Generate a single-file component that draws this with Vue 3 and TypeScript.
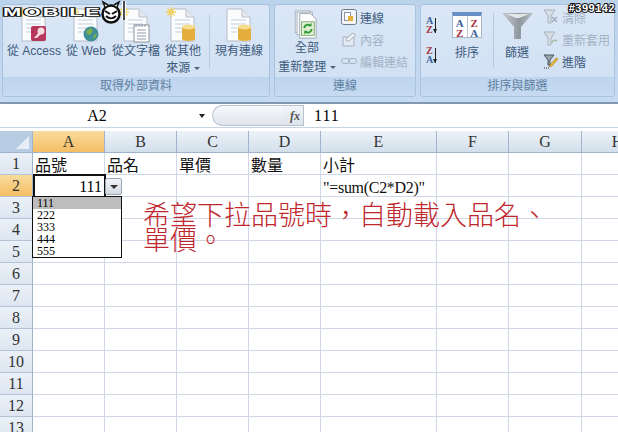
<template>
  <div class="excel">
    <div class="ribbon">
      <section class="group g-data">
        <div class="tools">
          <div class="big" v-for="b in dataButtons" :key="b.label">
            <svg class="doc" width="34" height="38" viewBox="0 0 34 38">
              <path d="M5 3h15l8 8v24H5z" fill="#fbfcfe" stroke="#b7bec8" />
              <path d="M20 3v8h8" fill="#e4e9f0" stroke="#b7bec8" />
              <path d="M9 14h15M9 18h15M9 22h15M9 26h10" stroke="#c3cfdd" />
              <g v-if="b.star" stroke="#f2d25a" stroke-width="1.300">
                <path d="M5 1v10M0 6h10M1.500 2.500l7 7M8.500 2.500l-7 7" />
              </g>
              <g v-if="b.kind === 'access'">
                <rect x="14" y="20" width="15" height="15" rx="2" fill="#b5385c" />
                <circle cx="24" cy="25" r="3.500" fill="#f6dbe2" />
                <path d="M22 26l-5 6h3l5-5z" fill="#f6dbe2" />
              </g>
              <g v-if="b.kind === 'web'">
                <circle cx="22" cy="28" r="7.500" fill="#3f8f96" />
                <path d="M17 25l5-3 2 3-3 4-3-1zM25 29l3-2-1 4-3 2z" fill="#7fae4e" />
              </g>
              <g v-if="b.kind === 'text'">
                <rect x="15" y="19" width="15" height="17" fill="#fff" stroke="#8a939e" />
                <path d="M17 18v3M20 18v3M23 18v3M26 18v3M18 24h9M18 27h9M18 30h9M18 33h9" stroke="#8f9aa7" />
              </g>
              <g v-if="b.kind === 'db'">
                <path d="M16 21h13v12c0 2.500-13 2.500-13 0z" fill="#e4ae3c" />
                <ellipse cx="22.500" cy="21" rx="6.500" ry="2.500" fill="#f7dc8b" />
              </g>
            </svg>
            <span class="lbl">{{ b.label }}<template v-if="b.more"><br />{{ b.more }} <i class="caret"></i></template></span>
          </div>
          <div class="sep"></div>
          <div class="big existing">
            <svg class="doc" width="34" height="38" viewBox="0 0 34 38">
              <path d="M5 3h15l8 8v24H5z" fill="#fbfcfe" stroke="#b7bec8" />
              <path d="M20 3v8h8" fill="#e4e9f0" stroke="#b7bec8" />
              <path d="M9 14h15M9 18h15M9 22h6M9 26h6" stroke="#c3cfdd" />
              <path d="M16 21h13v12c0 2.500-13 2.500-13 0z" fill="#e4ae3c" />
              <ellipse cx="22.500" cy="21" rx="6.500" ry="2.500" fill="#f7dc8b" />
            </svg>
            <span class="lbl">現有連線</span>
          </div>
        </div>
        <div class="caption">取得外部資料</div>
      </section>

      <section class="group g-conn">
        <div class="tools">
          <div class="big refresh">
            <svg width="30" height="32" viewBox="0 0 30 32">
              <rect x="2" y="1" width="17" height="24" fill="#eef1f5" stroke="#aab2bd" />
              <rect x="4" y="2.500" width="17" height="25" fill="#f5f7fa" stroke="#aab2bd" />
              <path d="M7 4h12l6 6v21H7z" fill="#fff" stroke="#9aa3ae" />
              <rect x="9" y="13" width="14" height="15" fill="#dff0d4" stroke="#7ba968" />
              <path d="M12 20a4 4 0 0 1 7-2.500M20 21a4 4 0 0 1-7 2.500" fill="none" stroke="#2f9a35" stroke-width="2" />
              <path d="M20 14v4h-4zM12 27v-4h4z" fill="#2f9a35" />
            </svg>
            <span class="lbl">全部<br />重新整理 <i class="caret"></i></span>
          </div>
          <div class="stack">
            <div class="row">
              <svg width="16" height="16" viewBox="0 0 16 16">
                <rect x=".5" y=".5" width="15" height="15" rx="2" fill="#f3f5f8" stroke="#6f7b89" />
                <rect x="3.500" y="3.500" width="6" height="8" fill="#fff" stroke="#8896a6" />
                <rect x="7" y="7" width="5" height="5" fill="#e4ae3c" />
              </svg>
              <span>連線</span>
            </div>
            <div class="row off">
              <svg width="16" height="16" viewBox="0 0 16 16">
                <path d="M2 6h11v9H2z" fill="#e3eaf3" stroke="#a9b3bf" />
                <path d="M5 8l7-6 3 2-7 6H5z" fill="#eef2f7" stroke="#a9b3bf" />
              </svg>
              <span>內容</span>
            </div>
            <div class="row off">
              <svg width="16" height="16" viewBox="0 0 16 16">
                <rect x=".5" y="5.500" width="8" height="5" rx="2.500" fill="none" stroke="#a9b3bf" />
                <rect x="7.500" y="5.500" width="8" height="5" rx="2.500" fill="none" stroke="#a9b3bf" />
              </svg>
              <span>編輯連結</span>
            </div>
          </div>
        </div>
        <div class="caption">連線</div>
      </section>

      <section class="group g-sort">
        <div class="tools">
          <div class="az">
            <div class="azbtn"><span><b class="blue">A</b><b class="red">Z</b></span><i></i></div>
            <div class="azbtn"><span><b class="red">Z</b><b class="blue">A</b></span><i></i></div>
          </div>
          <div class="big sort">
            <div class="sorticon">
              <span><b class="blue">A</b><b class="red">Z</b></span>
              <span><b class="red">Z</b><b class="blue">A</b></span>
            </div>
            <span class="lbl">排序</span>
          </div>
          <div class="sep"></div>
          <div class="big filter">
            <svg width="31" height="27" viewBox="0 0 31 27">
              <defs>
                <linearGradient id="funnel" x1="0" y1="0" x2="1" y2="0">
                  <stop offset="0" stop-color="#c9ced3" />
                  <stop offset=".55" stop-color="#8f979f" />
                  <stop offset="1" stop-color="#b5bcc3" />
                </linearGradient>
              </defs>
              <path d="M0 1h31L19 15v12h-7V15z" fill="url(#funnel)" />
              <path d="M4 2h23l-10 4h-3z" fill="#e6e9ec" />
            </svg>
            <span class="lbl">篩選</span>
          </div>
          <div class="stack">
            <div class="row off">
              <svg width="16" height="16" viewBox="0 0 16 16">
                <path d="M1 1h11L8 7v7H5V7z" fill="#d7dde5" stroke="#a9b3bf" />
                <path d="M9 8l5 5M14 8l-5 5" stroke="#9fabb8" stroke-width="1.300" />
              </svg>
              <span>清除</span>
            </div>
            <div class="row off">
              <svg width="16" height="16" viewBox="0 0 16 16">
                <path d="M1 1h11L8 7v7H5V7z" fill="#d7dde5" stroke="#a9b3bf" />
                <path d="M9 12a3 3 0 0 1 5-2" fill="none" stroke="#9fbf9f" stroke-width="1.500" />
              </svg>
              <span>重新套用</span>
            </div>
            <div class="row">
              <svg width="16" height="16" viewBox="0 0 16 16">
                <path d="M1 2h10L7 7v5H5V7z" fill="#9aa3ad" stroke="#4c5660" />
                <path d="M7 12l6-7 2 1-6 7-3 1z" fill="#e8b93a" stroke="#a67d1c" stroke-width=".6" />
                <path d="M1 15h1M3 15h1M5 15h1" stroke="#333" />
              </svg>
              <span>進階</span>
            </div>
          </div>
        </div>
        <div class="caption">排序與篩選</div>
      </section>
    </div>

    <div class="formula">
      <div class="namebox">A2</div>
      <i class="namearrow"></i>
      <div class="capsule"></div>
      <div class="fx">fx</div>
      <div class="input">111</div>
    </div>

    <div class="sheet">
      <div class="grid">
        <div class="corner"><i></i></div>
        <div v-for="c in columns" :key="c" class="colhead" :class="{ on: c === 'A' }">{{ c }}</div>
        <template v-for="r in rows" :key="r">
          <div class="rowhead" :class="{ on: r === 2 }">{{ r }}</div>
          <div v-for="c in columns" :key="c" class="cell" :class="{ tight: c + r === 'E2' }">{{ cellText(c, r) }}</div>
        </template>
      </div>

      <div class="active">111</div>
      <div class="dropbtn"><i></i></div>
      <ul class="droplist">
        <li v-for="(v, i) in options" :key="v" :class="{ sel: i === 0 }">{{ v }}</li>
      </ul>
      <div class="note">希望下拉品號時，自動載入品名、<br />單價。</div>
    </div>

    <div class="logo">
      <span class="logotext">MOBILE</span>
      <svg width="28" height="24" viewBox="0 0 28 24">
        <circle cx="11" cy="14" r="8.500" fill="#fff" stroke="#111" stroke-width="2.500" />
        <path d="M5 11l5 3M17 11l-5 3M6 16c3 3 7 3 10 0" fill="none" stroke="#111" stroke-width="2" />
        <path d="M5 7L3 2l5 3M17 7l2-5-5 3" fill="#fff" stroke="#111" stroke-width="1.500" />
        <path d="M24 1v19" stroke="#fff" stroke-width="4" />
        <path d="M24 1v19" stroke="#111" stroke-width="1.500" />
      </svg>
    </div>
    <div class="tag">#399142</div>
  </div>
</template>

<script setup lang="ts">
const dataButtons = [
  { label: '從 Access', kind: 'access', star: true, more: '' },
  { label: '從 Web', kind: 'web', star: true, more: '' },
  { label: '從文字檔', kind: 'text', star: true, more: '' },
  { label: '從其他', kind: 'db', star: true, more: '來源' },
]

const columns = ['A', 'B', 'C', 'D', 'E', 'F', 'G', 'H']
const rows = Array.from({ length: 13 }, (_, i) => i + 1)
const options = ['111', '222', '333', '444', '555']

const cells: Record<string, string> = {
  A1: '品號',
  B1: '品名',
  C1: '單價',
  D1: '數量',
  E1: '小計',
  E2: '"=sum(C2*D2)"',
}

function cellText(col: string, row: number) {
  return cells[col + row] ?? ''
}
</script>

<style scoped>
.excel {
  position: relative;
  width: 618px;
  height: 432px;
  overflow: hidden;
  background: #fff;
  font-family: "Liberation Serif", "Noto Sans CJK TC", serif;
}

.ribbon {
  display: flex;
  gap: 4px;
  height: 104px;
  box-sizing: border-box;
  padding: 4px 3px 5px 2px;
  background: linear-gradient(#bcd3ec, #c6daf1);
  border-bottom: 2px solid #7f99b5;
  font-family: "Liberation Sans", "Noto Sans CJK TC", sans-serif;
  font-size: 12px;
  color: #3d5a7c;
}
.group {
  display: flex;
  flex-direction: column;
  box-sizing: border-box;
  border: 1px solid #a9c3df;
  border-radius: 3px;
  background: linear-gradient(#dbe7f6, #cfe0f3);
  overflow: hidden;
}
.g-data { width: 268px; }
.g-conn { width: 142px; }
.g-sort { width: 195px; }
.tools {
  flex: 1;
  display: flex;
  min-height: 0;
}
.caption {
  height: 19px;
  line-height: 18px;
  text-align: center;
  background: linear-gradient(#bed5ee, #c6dbf2);
  color: #5f7f9f;
}
.big {
  display: flex;
  flex-direction: column;
  align-items: center;
  text-align: center;
  line-height: 16px;
  white-space: nowrap;
}
.g-data .tools { padding-left: 5px; }
.g-data .big { padding-top: 1px; line-height: 17px; }
.g-data .big:nth-child(1) { width: 52px; }
.g-data .big:nth-child(2) { width: 52px; }
.g-data .big:nth-child(3) { width: 48px; }
.g-data .big:nth-child(4) { width: 46px; }
.g-data .big .doc { margin-bottom: -1px; }
.g-data .existing { width: 56px; margin-left: 1px; }
.sep {
  width: 1px;
  margin: 10px 0 9px 3px;
  background: #b5c9e0;
}
.caret {
  display: inline-block;
  border: 3px solid transparent;
  border-top: 3px solid #4f6480;
  border-bottom: 0;
  vertical-align: middle;
}
.refresh { width: 62px; margin-left: 1px; padding-top: 5px; line-height: 19px; }
.refresh .lbl { margin-top: 0; }
.stack {
  display: flex;
  flex-direction: column;
  gap: 4px;
  padding-top: 3px;
}
.g-conn .stack { margin-left: 3px; }
.row {
  display: flex;
  align-items: center;
  gap: 3px;
  height: 18px;
  white-space: nowrap;
}
.off { color: #a3b2c4; }

.az {
  display: flex;
  flex-direction: column;
  gap: 8px;
  width: 23px;
  padding: 9px 0 0 5px;
}
.azbtn {
  display: flex;
  align-items: center;
  gap: 2px;
  height: 22px;
  font-family: "Liberation Serif", serif;
}
.azbtn span, .sorticon span {
  display: flex;
  flex-direction: column;
  font-size: 10px;
  line-height: 9px;
}
.azbtn i {
  position: relative;
  width: 1px;
  height: 15px;
  background: #222;
}
.azbtn i::after {
  content: "";
  position: absolute;
  left: -2px;
  bottom: 0;
  border: 2.500px solid transparent;
  border-top: 4px solid #222;
  border-bottom: 0;
}
.blue { color: #3b5f9a; }
.red { color: #a6343f; }
.sort { width: 38px; margin-left: -1px; padding-top: 7px; }
.sorticon {
  display: flex;
  box-sizing: border-box;
  width: 30px;
  height: 26px;
  margin-bottom: 7px;
  background: #fff;
  border: 1px solid #a9b7c8;
  border-top: 4px solid #6a8fc4;
  font-family: "Liberation Serif", serif;
}
.sorticon span {
  flex: 1;
  align-items: center;
  padding-top: 2px;
  font-size: 11px;
  line-height: 10px;
}
.sorticon span + span { border-left: 1px solid #b9c5d3; }
.filter { width: 44px; padding-top: 7px; }
.filter .lbl { margin-top: 6px; }
.g-sort .sep { margin: 8px 0 9px 7px; }
.g-sort .filter { margin-left: 1px; }
.g-sort .stack { padding-top: 3px; margin-left: 4px; }

.formula {
  display: flex;
  align-items: center;
  box-sizing: border-box;
  height: 24px;
  background: #fff;
  border-bottom: 1px solid #c5d3e2;
  font-size: 16px;
}
.namebox {
  width: 194px;
  text-align: center;
}
.namearrow {
  width: 0;
  height: 0;
  margin: 0 7px 0 5px;
  border: 3.500px solid transparent;
  border-top: 4px solid #222;
  border-bottom: 0;
}
.capsule {
  width: 71px;
  height: 21px;
  box-sizing: border-box;
  border: 1px solid #b5c2d0;
  border-right: 0;
  border-radius: 11px 0 0 11px;
  background: linear-gradient(#f7f9fb, #dfe5ec);
}
.fx {
  box-sizing: border-box;
  width: 21px;
  height: 21px;
  line-height: 20px;
  padding-left: 4px;
  text-align: center;
  font-size: 12px;
  font-style: italic;
  font-weight: 700;
  color: #555;
  background: linear-gradient(#f2f5f8, #dde4ec);
  border-top: 1px solid #b5c2d0;
  border-bottom: 1px solid #b5c2d0;
  border-right: 1px solid #b5c2d0;
}
.input {
  padding-left: 10px;
  letter-spacing: 1px;
}

.sheet {
  position: relative;
  box-sizing: border-box;
  height: 304px;
  padding-top: 3px;
  background: #fff;
}
.grid {
  display: grid;
  grid-template-columns: 33px 72px 72px 72px 72px 116px 72px 73px 72px;
  grid-auto-rows: 22px;
  font-size: 16px;
  color: #111;
}
.corner {
  position: relative;
  background: #b8cce4;
  border-right: 1px solid #9fb4cc;
  border-bottom: 1px solid #9fb4cc;
}
.corner i {
  position: absolute;
  right: 3px;
  bottom: 3px;
  border-style: solid;
  border-width: 0 0 13px 13px;
  border-color: transparent transparent #e6eef7 transparent;
}
.colhead {
  text-align: center;
  line-height: 21px;
  color: #333;
  background: linear-gradient(#edf2f8, #d2dfec);
  border-right: 1px solid #9fb4cc;
  border-bottom: 1px solid #9fb4cc;
}
.colhead.on { background: linear-gradient(#f9dc9c, #f4bd63); }
.rowhead {
  text-align: center;
  line-height: 21px;
  color: #333;
  background: linear-gradient(#eaf0f7, #dde6f1);
  border-right: 1px solid #9fb4cc;
  border-bottom: 1px solid #b4c4d6;
}
.rowhead.on { background: linear-gradient(#f9dc9c, #f4bd63); }
.cell {
  padding-left: 2px;
  line-height: 25px;
  white-space: nowrap;
  border-right: 1px solid #d0d7e5;
  border-bottom: 1px solid #d0d7e5;
}
.cell.tight { letter-spacing: -0.3px; }

.active {
  position: absolute;
  left: 33px;
  top: 46px;
  box-sizing: border-box;
  width: 73px;
  height: 24px;
  padding-right: 2px;
  border: 2px solid #111;
  background: #fff;
  text-align: right;
  line-height: 22px;
  font-size: 16px;
}
.dropbtn {
  position: absolute;
  left: 105px;
  top: 50px;
  display: flex;
  align-items: center;
  justify-content: center;
  box-sizing: border-box;
  width: 17px;
  height: 17px;
  border: 1px solid #9aa7b6;
  border-radius: 2px;
  background: linear-gradient(#f2f4f7, #d3dae3);
}
.dropbtn i {
  border: 4px solid transparent;
  border-top: 4px solid #333;
  border-bottom: 0;
}
.droplist {
  position: absolute;
  left: 32px;
  top: 68px;
  box-sizing: border-box;
  width: 90px;
  height: 62px;
  margin: 0;
  padding: 0;
  list-style: none;
  background: #fff;
  border: 1px solid #111;
  font-size: 12px;
  line-height: 12px;
}
.droplist li { padding-left: 4px; }
.droplist .sel { background: #bdbdbd; }
.note {
  position: absolute;
  left: 143px;
  top: 73px;
  font-family: "Noto Sans CJK TC", sans-serif;
  font-size: 27px;
  line-height: 25px;
  font-weight: 300;
  color: #c0272d;
  white-space: nowrap;
}

.logo {
  position: absolute;
  left: 3px;
  top: 0;
  display: flex;
  align-items: center;
  height: 24px;
}
.logotext {
  display: inline-block;
  width: 97px;
  margin-top: 2px;
  font-family: "Liberation Sans", sans-serif;
  font-size: 10px;
  font-weight: 700;
  line-height: 10px;
  letter-spacing: 1px;
  color: #fff;
  -webkit-text-stroke: 1.500px #111;
  paint-order: stroke fill;
  transform: scaleX(2.200);
  transform-origin: left center;
}
.tag {
  position: absolute;
  right: 3px;
  top: 3px;
  font-family: "Liberation Sans", sans-serif;
  font-size: 11px;
  font-weight: 700;
  line-height: 11px;
  letter-spacing: 0.5px;
  color: #fff;
  -webkit-text-stroke: 2px #111;
  paint-order: stroke fill;
}
</style>
